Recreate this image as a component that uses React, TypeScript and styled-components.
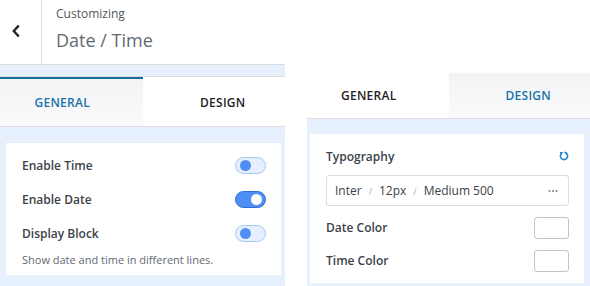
import React from 'react';
import styled, { createGlobalStyle } from 'styled-components';

const Global = createGlobalStyle`
  *, *::before, *::after { box-sizing: border-box; }
  body {
    margin: 0;
    background: #fff;
    font-family: "Open Sans", "Noto Sans", sans-serif;
  }
`;

const Page = styled.div`
  display: flex;
  align-items: flex-start;
  width: 590px;
  height: 286px;
  overflow: hidden;
`;

const LeftPanel = styled.div`
  width: 285px;
  height: 286px;
  background: #e7f0fd;
  display: flex;
  flex-direction: column;
`;

const Header = styled.div`
  height: 65px;
  display: flex;
  background: #fff;
  border-bottom: 1px solid #dcdcde;
`;

const BackButton = styled.div`
  width: 42px;
  border-right: 1px solid #dcdcde;
  display: flex;
  align-items: center;
  padding: 0 0 2px 11px;
  color: #1d2327;
`;

const HeaderText = styled.div`
  padding: 6px 0 0 14px;
`;

const Small = styled.div`
  font-size: 12px;
  color: #50575e;
  line-height: 16px;
`;

const Big = styled.div`
  font-size: 18px;
  color: #646970;
  line-height: 24px;
  margin-top: 6px;
`;

const Band = styled.div`
  height: 12px;
  border-bottom: 1px solid #dcdcde;
`;

const TabRow = styled.div<{ $h: number }>`
  display: flex;
  height: ${p => p.$h}px;
  background: #fff;
  border-bottom: 1px solid #dcdcde;
`;

const Tab = styled.div<{ $active?: boolean; $bar?: boolean; $side: 'l' | 'r' }>`
  flex: 1;
  display: flex;
  align-items: center;
  justify-content: center;
  font-size: 12px;
  font-weight: 600;
  letter-spacing: 0.3px;
  color: ${p => (p.$active ? '#1a73a8' : '#1d2327')};
  background: ${p => (p.$active ? 'linear-gradient(#f2f3f5, #fbfbfc)' : '#fff')};
  border-top: 2px solid ${p => (p.$bar ? '#1a6e9c' : 'transparent')};
  padding-${p => (p.$side === 'l' ? 'right' : 'left')}: 18px;
`;

const Card = styled.div<{ $pad: string }>`
  background: #fff;
  padding: ${p => p.$pad};
`;

const LeftCard = styled(Card)`
  margin: 16px 4px 0 6px;
`;

const Row = styled.div<{ $h: number; $top?: number }>`
  display: flex;
  align-items: center;
  justify-content: space-between;
  height: ${p => p.$h}px;
  margin-top: ${p => p.$top ?? 0}px;
`;

const Label = styled.div`
  font-size: 12px;
  font-weight: 600;
  color: #3c434a;
`;

const Note = styled.div`
  font-size: 11px;
  color: #646970;
  margin-top: 2px;
`;

const Toggle = styled.div<{ $on?: boolean }>`
  width: 31px;
  height: 17px;
  border-radius: 9px;
  border: 1px solid ${p => (p.$on ? '#2c6fca' : '#a8c8f0')};
  background: ${p => (p.$on ? '#4f8ff5' : '#e6effd')};
  position: relative;
  margin-right: 15px;

  &::after {
    content: '';
    position: absolute;
    top: 2px;
    ${p => (p.$on ? 'right: 3px;' : 'left: 4px;')}
    width: 11px;
    height: 11px;
    border-radius: 50%;
    background: ${p => (p.$on ? '#fff' : '#4f8ff5')};
  }
`;

const RightPanel = styled.div`
  flex: 1;
  margin: 71px 0 0 22px;
  height: 215px;
  background: #e7f0fd;
  display: flex;
  flex-direction: column;
`;

const RightCard = styled(Card)`
  margin: 15px 6px 0 3px;
`;

const Head = styled.div`
  display: flex;
  justify-content: space-between;
  align-items: center;
  height: 18px;
`;

const FontBox = styled.div`
  margin-top: 10px;
  height: 31px;
  border: 1px solid #dcdcde;
  border-radius: 3px;
  display: flex;
  align-items: center;
  justify-content: space-between;
  padding: 0 10px 0 8px;
  font-size: 12px;
  color: #3c434a;
`;

const Sep = styled.span`
  color: #a7aaad;
  font-size: 9px;
  margin: 0 7px;
`;

const Swatch = styled.div`
  width: 35px;
  height: 22px;
  border: 1px solid #c3c4c7;
  border-radius: 3px;
  background: #fff;
`;

const Reset = () => (
  <svg width="10" height="10" viewBox="0 0 10 10" fill="none">
    <path d="M2.3 2.6A3.6 3.6 0 1 0 5.4 1.4" stroke="#1e88c7" strokeWidth="1.6" />
    <path d="M0.6 1 L4.2 1 L2.4 4 Z" fill="#1e88c7" />
  </svg>
);

const Dots = () => (
  <svg width="10" height="4" viewBox="0 0 10 4">
    <circle cx="1.5" cy="2" r="1" fill="#787c82" />
    <circle cx="5" cy="2" r="1" fill="#787c82" />
    <circle cx="8.5" cy="2" r="1" fill="#787c82" />
  </svg>
);

const Chevron = () => (
  <svg width="10" height="14" viewBox="0 0 10 14">
    <path d="M7.8 1.5 L2.8 7 L7.8 12.5" stroke="#1d2327" strokeWidth="2.4" fill="none" />
  </svg>
);

export default function App() {
  return (
    <Page>
      <Global />
      <LeftPanel>
        <Header>
          <BackButton>
            <Chevron />
          </BackButton>
          <HeaderText>
            <Small>Customizing</Small>
            <Big>Date / Time</Big>
          </HeaderText>
        </Header>
        <Band />
        <TabRow $h={50}>
          <Tab $active $bar $side="l">GENERAL</Tab>
          <Tab $side="r">DESIGN</Tab>
        </TabRow>
        <LeftCard $pad="5px 0 8px 16px">
          <Row $h={34}>
            <Label>Enable Time</Label>
            <Toggle />
          </Row>
          <Row $h={34}>
            <Label>Enable Date</Label>
            <Toggle $on />
          </Row>
          <Row $h={34}>
            <Label>Display Block</Label>
            <Toggle />
          </Row>
          <Note>Show date and time in different lines.</Note>
        </LeftCard>
      </LeftPanel>
      <RightPanel>
        <TabRow $h={48}>
          <Tab $side="l">GENERAL</Tab>
          <Tab $active $side="r">DESIGN</Tab>
        </TabRow>
        <RightCard $pad="13px 15px 6px 16px">
          <Head>
            <Label>Typography</Label>
            <Reset />
          </Head>
          <FontBox>
            <span>
              Inter<Sep>/</Sep>12px<Sep>/</Sep>Medium 500
            </span>
            <Dots />
          </FontBox>
          <Row $h={33} $top={5}>
            <Label>Date Color</Label>
            <Swatch />
          </Row>
          <Row $h={33}>
            <Label>Time Color</Label>
            <Swatch />
          </Row>
        </RightCard>
      </RightPanel>
    </Page>
  );
}
